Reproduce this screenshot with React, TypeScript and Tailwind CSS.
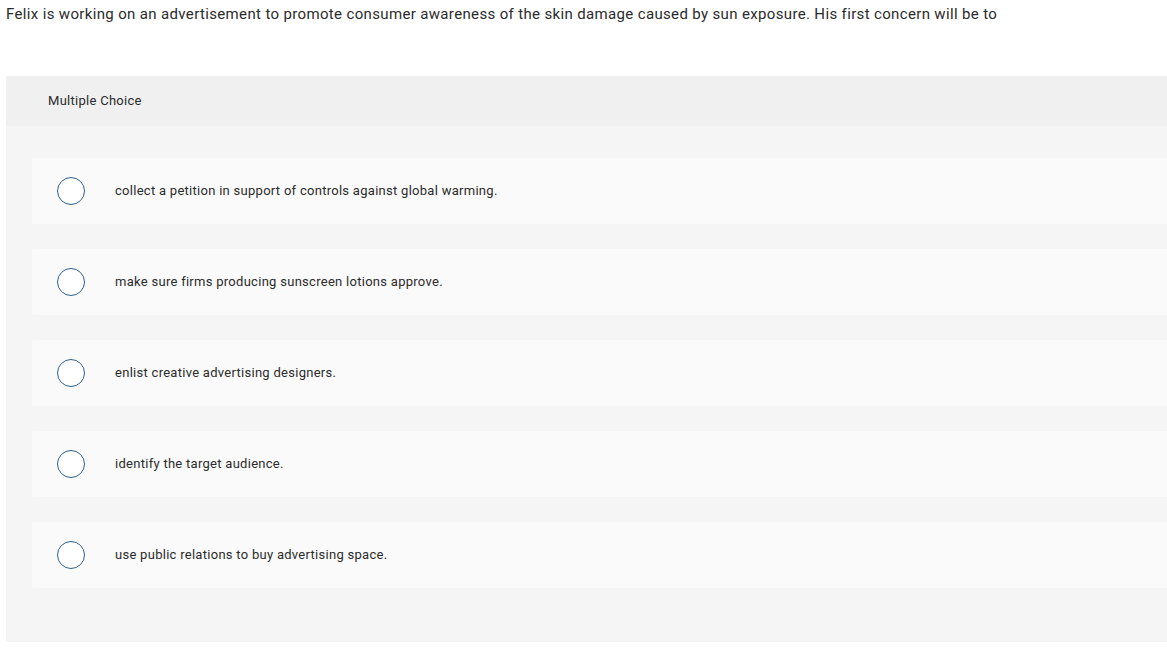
const options = [
  "collect a petition in support of controls against global warming.",
  "make sure firms producing sunscreen lotions approve.",
  "enlist creative advertising designers.",
  "identify the target audience.",
  "use public relations to buy advertising space.",
];

export default function App() {
  return (
    <div className="w-[1167px] h-[663px] overflow-hidden bg-white text-[#2b2b2b] font-['Roboto',sans-serif]">
      {/* Question */}
      <p className="pl-[6px] pt-[4px] text-[15px] leading-[20px] tracking-[0.35px]">
        Felix is working on an advertisement to promote consumer awareness of the skin damage caused by sun exposure. His first concern will be to
      </p>

      {/* Answer panel */}
      <div className="ml-[6px] mt-[52px] w-[1180px] rounded-bl-[3px] bg-[#f5f5f5]">
        <div className="h-[50px] bg-[#f0f0f0] pl-[42px] flex items-center text-[13px] tracking-[0.28px]">
          Multiple Choice
        </div>
        <div className="pl-[26px] pt-[32px] pb-[54px] flex flex-col gap-[25px]">
          {options.map((opt) => (
            <div key={opt} className="h-[66px] bg-[#fafafa] rounded-l-[3px] flex items-center">
              <span className="ml-[25px] w-[28px] h-[28px] rounded-full border-[1.5px] border-[#2f5f8f] bg-white shrink-0" />
              <span className="ml-[30px] text-[13px] tracking-[0.28px]">{opt}</span>
            </div>
          ))}
        </div>
      </div>
    </div>
  );
}
